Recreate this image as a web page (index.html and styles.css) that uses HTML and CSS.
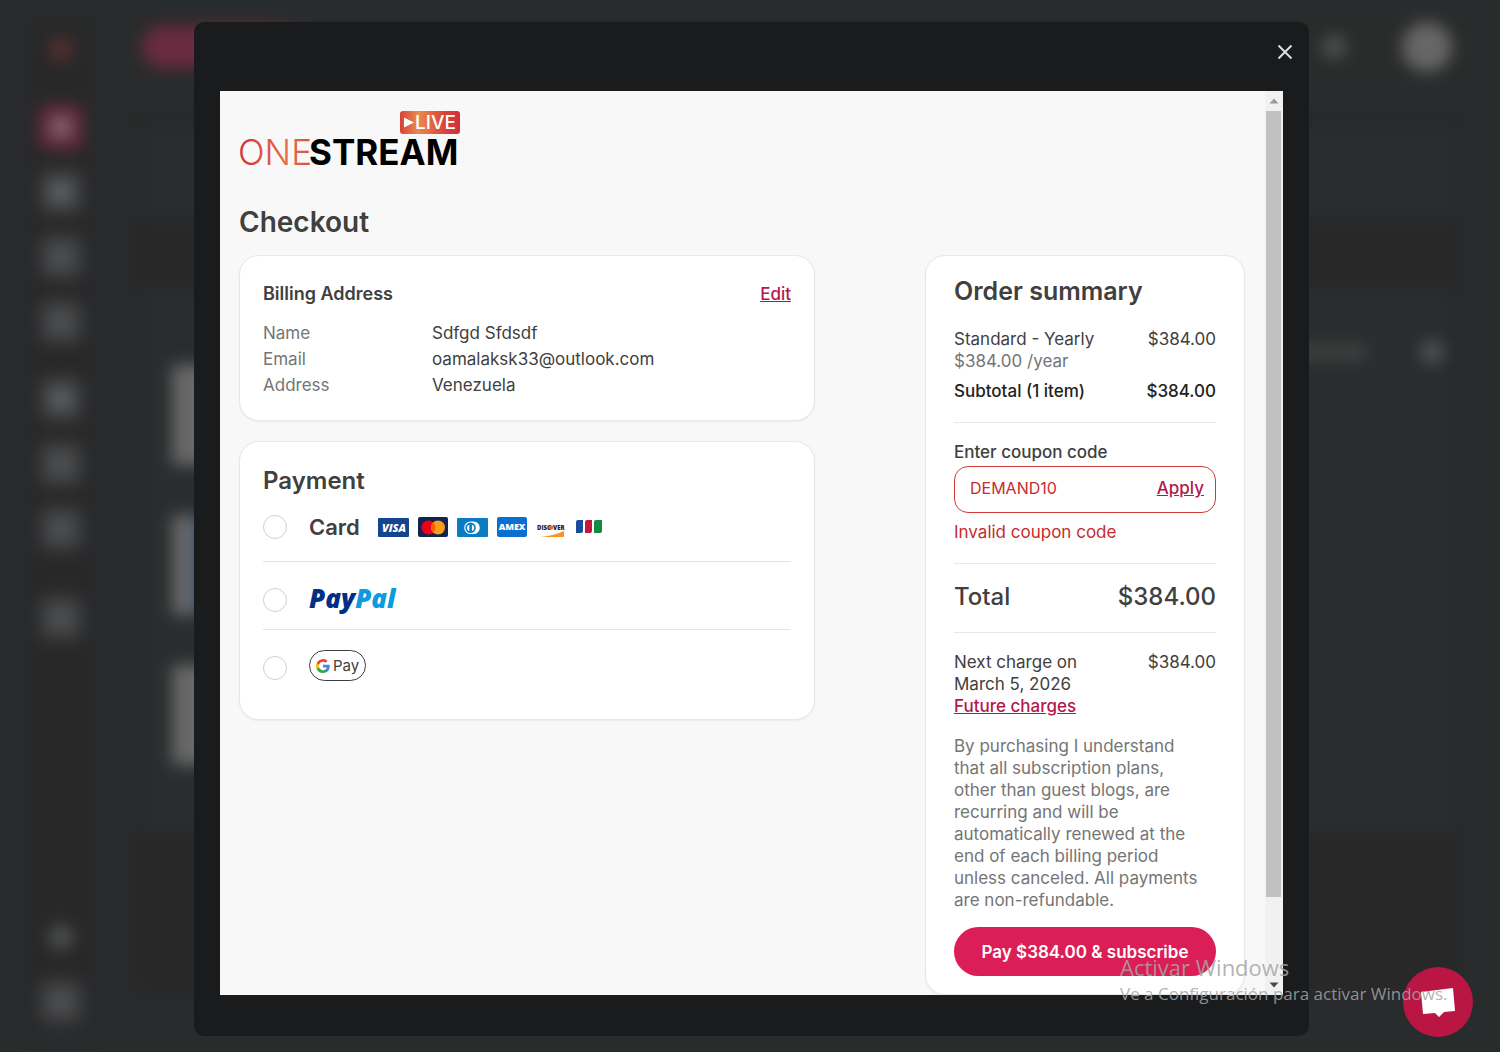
FILE: index.html
```html
<!DOCTYPE html>
<html lang="en">
<head>
    <meta charset="UTF-8">
    <meta name="viewport" content="width=device-width, initial-scale=1.0">
    <title>OneStream Live - Checkout</title>
    <link rel="stylesheet" href="styles.css">
</head>
<body>
    <!-- Dashboard behind the modal -->
    <div class="app" aria-hidden="true">
        <div class="sidebar">
            <span class="brand"></span>
            <span class="tile active"></span>
            <span class="tile bright"></span>
            <span class="tile"></span>
            <span class="tile"></span>
            <span class="tile bright group"></span>
            <span class="tile"></span>
            <span class="tile"></span>
            <span class="tile last"></span>
            <span class="dot"></span>
            <span class="tile"></span>
        </div>
        <div class="main">
            <div class="topbar">
                <span class="pill"></span>
                <span class="dot"></span>
                <span class="avatar"></span>
            </div>
            <div class="board">
                <div class="strip"></div>
                <div class="list">
                    <div class="tools">
                        <span class="bar"></span>
                        <span class="dot"></span>
                    </div>
                    <span class="thumb"></span>
                    <span class="thumb blue"></span>
                    <span class="thumb"></span>
                </div>
            </div>
        </div>
    </div>

    <div class="overlay">
        <div class="modal" role="dialog" aria-label="Checkout">
            <div class="modal-head">
                <button type="button" class="close" aria-label="Close">
                    <svg width="16" height="16" viewBox="0 0 16 16"><path d="M1.5 1.5l13 13M14.5 1.5l-13 13" stroke="#dcdfe0" stroke-width="2" fill="none"/></svg>
                </button>
            </div>

            <div class="frame">
                <main class="page">
                    <svg class="logo" width="222" height="60" viewBox="0 0 222 60" role="img" aria-label="OneStream Live">
                        <defs>
                            <linearGradient id="oneFill" x1="0" x2="1" y1="0" y2="0">
                                <stop offset="0" stop-color="#cf2e35"/>
                                <stop offset="0.65" stop-color="#e5704a"/>
                                <stop offset="1" stop-color="#d94a3c"/>
                            </linearGradient>
                            <linearGradient id="liveFill" x1="0" x2="1" y1="0" y2="0">
                                <stop offset="0" stop-color="#d6423a"/>
                                <stop offset="0.3" stop-color="#e98b4d"/>
                                <stop offset="0.75" stop-color="#d9423a"/>
                                <stop offset="1" stop-color="#cf3038"/>
                            </linearGradient>
                        </defs>
                        <rect x="161" y="1" width="60" height="23" rx="3" fill="url(#liveFill)"/>
                        <path d="M165 7.500v10l10-5z" fill="#fff"/>
                        <text class="logo-live" x="176" y="19">LIVE</text>
                        <text class="logo-one" x="-1" y="55" fill="url(#oneFill)">ONE</text>
                        <text class="logo-stream" x="70" y="55">STREAM</text>
                    </svg>

                    <h1>Checkout</h1>

                    <div class="columns">
                        <div class="left">
                            <section class="card billing">
                                <div class="card-head">
                                    <h2>Billing Address</h2>
                                    <a href="#edit">Edit</a>
                                </div>
                                <dl>
                                    <dt>Name</dt>
                                    <dd>Sdfgd Sfdsdf</dd>
                                    <dt>Email</dt>
                                    <dd>oamalaksk33@outlook.com</dd>
                                    <dt>Address</dt>
                                    <dd>Venezuela</dd>
                                </dl>
                            </section>

                            <section class="card payment">
                                <h2>Payment</h2>
                                <div class="method">
                                    <input type="radio" id="pay-card" name="method">
                                    <label for="pay-card">
                                        Card
                                        <span class="brands">
                                            <svg width="31" height="20" viewBox="0 0 31 20">
                                                <rect y="1" width="31" height="19" rx="1" fill="#15458f"/>
                                                <text class="visa" x="16" y="15" text-anchor="middle">VISA</text>
                                            </svg>
                                            <svg width="30" height="20" viewBox="0 0 30 20">
                                                <rect width="30" height="20" rx="2" fill="#14224f"/>
                                                <circle cx="10.500" cy="10.500" r="7" fill="#eb001b"/>
                                                <circle cx="20" cy="10.500" r="7" fill="#f79e1b"/>
                                                <path d="M15.250 5.400a7 7 0 0 1 0 10.200a7 7 0 0 1 0-10.200z" fill="#ff5f00"/>
                                            </svg>
                                            <svg width="31" height="20" viewBox="0 0 31 20">
                                                <rect y="1" width="31" height="19" rx="1" fill="#0b7cc1"/>
                                                <path d="M13.500 4.500h3a6.300 6.300 0 0 1 0 12.600h-3a6.300 6.300 0 0 1 0-12.600z" fill="#fff"/>
                                                <circle cx="13.600" cy="10.800" r="5.200" fill="#0b7cc1"/>
                                                <path d="M12.300 7.400a3.600 3.600 0 0 0 0 6.800zM14.900 7.400a3.600 3.600 0 0 1 0 6.800z" fill="#fff"/>
                                            </svg>
                                            <svg width="30" height="20" viewBox="0 0 30 20">
                                                <rect width="30" height="20" rx="2" fill="#0a6fd1"/>
                                                <text class="amex" x="15" y="13" text-anchor="middle">AMEX</text>
                                            </svg>
                                            <svg width="30" height="20" viewBox="0 0 30 20">
                                                <text class="discover" x="1" y="13">DISC</text>
                                                <circle cx="15" cy="10.500" r="2.300" fill="#ee6b23"/>
                                                <text class="discover" x="17" y="13">VER</text>
                                                <path d="M5 20c9-1 17-3 23-6v6z" fill="#f9941e"/>
                                            </svg>
                                            <svg width="28" height="20" viewBox="0 0 28 20">
                                                <path d="M3 3h5v11a2 2 0 0 1-2 2H1V5a2 2 0 0 1 2-2z" fill="#1b4c9b"/>
                                                <path d="M12 3h5v11a2 2 0 0 1-2 2h-5V5a2 2 0 0 1 2-2z" fill="#c9153d"/>
                                                <path d="M21 3h6v11a2 2 0 0 1-2 2h-6V5a2 2 0 0 1 2-2z" fill="#118a42"/>
                                            </svg>
                                        </span>
                                    </label>
                                </div>
                                <div class="method">
                                    <input type="radio" id="pay-paypal" name="method">
                                    <label for="pay-paypal" class="paypal"><span>Pay</span><span>Pal</span></label>
                                </div>
                                <div class="method">
                                    <input type="radio" id="pay-google" name="method">
                                    <label for="pay-google" class="gpay">
                                        <svg width="14" height="14" viewBox="0 0 18 18">
                                            <path d="M17.640 9.200c0-.64-.06-1.250-.16-1.840H9v3.480h4.840a4.140 4.140 0 0 1-1.800 2.720v2.260h2.920c1.700-1.570 2.680-3.880 2.680-6.620z" fill="#4285f4"/>
                                            <path d="M9 18c2.430 0 4.470-.8 5.960-2.180l-2.920-2.260c-.8.540-1.840.86-3.040.86-2.340 0-4.330-1.580-5.040-3.710H.960v2.330A9 9 0 0 0 9 18z" fill="#34a853"/>
                                            <path d="M3.960 10.710a5.400 5.400 0 0 1 0-3.420V4.960H.960a9 9 0 0 0 0 8.080z" fill="#fbbc05"/>
                                            <path d="M9 3.580c1.320 0 2.510.45 3.440 1.350l2.580-2.590A9 9 0 0 0 .960 4.960l3 2.330C4.670 5.160 6.660 3.580 9 3.580z" fill="#ea4335"/>
                                        </svg>
                                        Pay
                                    </label>
                                </div>
                            </section>
                        </div>

                        <aside class="card summary">
                            <h2>Order summary</h2>
                            <div class="row">
                                <span>Standard - Yearly</span>
                                <span>$384.00</span>
                            </div>
                            <div class="row muted">
                                <span>$384.00 /year</span>
                            </div>
                            <div class="row subtotal">
                                <span>Subtotal (1 item)</span>
                                <span>$384.00</span>
                            </div>

                            <form class="coupon">
                                <label for="coupon">Enter coupon code</label>
                                <div class="coupon-box">
                                    <input type="text" id="coupon" name="coupon" value="DEMAND10">
                                    <button type="button">Apply</button>
                                </div>
                                <p>Invalid coupon code</p>
                            </form>

                            <div class="row total">
                                <span>Total</span>
                                <span>$384.00</span>
                            </div>

                            <div class="row next">
                                <span>Next charge on<br>March 5, 2026</span>
                                <span>$384.00</span>
                            </div>
                            <a href="#future">Future charges</a>

                            <p class="terms">By purchasing I understand that all subscription plans, other than guest blogs, are recurring and will be automatically renewed at the end of each billing period unless canceled. All payments are non-refundable.</p>

                            <button type="submit" class="pay">Pay $384.00 &amp; subscribe</button>
                        </aside>
                    </div>
                </main>

                <div class="scrollbar">
                    <svg width="18" height="20" viewBox="0 0 18 20"><path d="M4.500 12.500l4.500-5 4.500 5z" fill="#9a9a9a"/></svg>
                    <div class="track"><div class="thumb-bar"></div></div>
                    <svg width="18" height="20" viewBox="0 0 18 20"><path d="M4.500 7.500l4.500 5 4.500-5z" fill="#484848"/></svg>
                </div>
            </div>
        </div>
    </div>

    <button type="button" class="chat" aria-label="Open chat">
        <svg width="36" height="30" viewBox="0 0 36 30"><path d="M1 5l32-4 2 23-11 1-5 5-4-4-12 1z" fill="#fff"/></svg>
    </button>

    <div class="watermark">
        <p class="big">Activar Windows</p>
        <p>Ve a Configuración para activar Windows.</p>
    </div>
</body>
</html>
```

FILE: styles.css
```css
/* Global Styles */
* {
    box-sizing: border-box;
}

body {
    font-family: 'Inter', sans-serif;
    font-size: 17px;
    line-height: 22px;
    margin: 0;
    height: 100vh;
    overflow: hidden;
    background-color: #292c2d;
    color: #404040;
}

h1, h2, p, dl, dd {
    margin: 0;
}

a {
    color: #b4174b;
    font-weight: 500;
}

button, input {
    font-family: inherit;
    font-size: inherit;
}

/* Blurred dashboard */
.app {
    display: flex;
    gap: 34px;
    height: 100vh;
    padding: 16px 36px 20px 26px;
    filter: blur(8px);
}

.sidebar {
    display: flex;
    flex-direction: column;
    align-items: center;
    gap: 21px;
    width: 70px;
    padding: 22px 0 8px;
    background-color: #282829;
}

.sidebar .dot {
    margin-bottom: 10px;
}

.brand {
    width: 22px;
    height: 22px;
    border-radius: 50%;
    background-color: #5c302f;
    margin-bottom: 24px;
}

.tile {
    width: 44px;
    height: 44px;
    border-radius: 8px;
    border: 12px solid #3e3f40;
    background-color: #505152;
}

.tile.bright {
    background-color: #606162;
}

.tile.active {
    border-color: #64293b;
    background-color: #7d6670;
}

.tile.group {
    margin-top: 12px;
}

.tile.last {
    margin-top: 24px;
    margin-bottom: auto;
}

.dot {
    width: 24px;
    height: 24px;
    border-radius: 50%;
    background-color: #4f5151;
}

.main {
    flex: 1;
    display: flex;
    flex-direction: column;
    gap: 32px;
}

.topbar {
    display: flex;
    align-items: center;
    gap: 56px;
    height: 62px;
    padding: 0 12px;
    background-color: #2a2b2b;
}

.topbar .pill {
    width: 160px;
    height: 42px;
    border-radius: 21px;
    background-color: #6a2b41;
    margin-right: auto;
}

.avatar {
    width: 50px;
    height: 50px;
    border-radius: 50%;
    background-color: #666667;
}

.board {
    display: flex;
    flex-direction: column;
    gap: 76px;
    flex: 1;
    padding: 16px 10px 0;
    background-color: #282829;
    margin-bottom: 34px;
}

.strip {
    height: 90px;
    background-color: #292d2e;
}

.list {
    display: flex;
    flex-direction: column;
    gap: 50px;
    padding: 47px 10px 66px 32px;
    background-color: #292d2e;
}

.tools {
    display: flex;
    align-items: center;
    justify-content: flex-end;
    gap: 54px;
    height: 26px;
    margin-bottom: -50px;
}

.tools .bar {
    width: 120px;
    height: 14px;
    background-color: #434343;
}

.list .thumb {
    width: 120px;
    height: 100px;
    background-color: #686868;
}

.list .thumb.blue {
    border-right: 98px solid #34506f;
}

/* Modal */
.overlay {
    position: absolute;
    inset: 0;
    padding: 22px 191px 16px 194px;
}

.modal {
    display: flex;
    flex-direction: column;
    height: 100%;
    padding: 0 26px 41px;
    border-radius: 10px;
    background-color: #191b1c;
}

.modal-head {
    display: flex;
    justify-content: flex-end;
    align-items: center;
    height: 69px;
    padding-bottom: 10px;
}

.close {
    display: flex;
    padding: 6px;
    margin-right: -16px;
    border: none;
    background: none;
    cursor: pointer;
}

.frame {
    flex: 1;
    display: flex;
    min-height: 0;
    background-color: #f8f8f8;
}

.page {
    flex: 1;
    padding: 19px 20px 0 19px;
    overflow: hidden;
}

.scrollbar {
    display: flex;
    flex-direction: column;
    width: 18px;
    background-color: #f1f1f1;
}

.track {
    flex: 1;
    padding: 0 2px 0 1px;
}

.thumb-bar {
    height: 91%;
    background-color: #c1c1c1;
}

/* Checkout */
.logo {
    display: block;
    overflow: visible;
}

.logo-live {
    font-size: 19px;
    font-weight: 500;
    fill: #fff;
}

.logo-one {
    font-size: 35px;
    font-weight: 300;
}

.logo-stream {
    font-size: 35px;
    font-weight: 700;
    fill: #000;
}

h1 {
    font-size: 28px;
    font-weight: 600;
    line-height: 36px;
    margin: 34px 0 15px;
}

.columns {
    display: flex;
    align-items: flex-start;
    justify-content: space-between;
    gap: 24px;
}

.left {
    display: flex;
    flex-direction: column;
    gap: 20px;
    width: 576px;
}

.card {
    border: 1px solid #e8e8e8;
    border-radius: 20px;
    background-color: #fff;
    box-shadow: 0 1px 2px rgba(0, 0, 0, 0.06);
}

.card h2 {
    font-size: 24px;
    font-weight: 600;
    line-height: 34px;
}

.billing {
    padding: 24px 23px 22px;
}

.card-head {
    display: flex;
    justify-content: space-between;
    align-items: center;
    margin-bottom: 12px;
}

.billing h2 {
    font-size: 18px;
    line-height: 28px;
}

.billing dl {
    display: grid;
    grid-template-columns: 169px 1fr;
    line-height: 26px;
}

.billing dt {
    color: #757575;
}

.payment {
    padding: 22px 23px 14px;
}

.method {
    display: flex;
    align-items: center;
    gap: 22px;
    height: 68px;
}

.method:nth-of-type(1) {
    height: 63px;
    padding-bottom: 6px;
}

.method:nth-of-type(2) {
    padding-top: 8px;
}

.method:nth-of-type(3) {
    height: 76px;
}

.method + .method {
    border-top: 1px solid #e2e5e5;
}

.method input {
    appearance: none;
    width: 24px;
    height: 24px;
    margin: 0;
    border: 1px solid #cfcfcf;
    border-radius: 50%;
    background-color: #fff;
}

.method label {
    display: flex;
    align-items: center;
    gap: 18px;
    font-size: 22px;
    font-weight: 600;
}

.brands {
    display: flex;
    align-items: center;
    gap: 9px;
}

.visa {
    font: italic 800 11px 'Open Sans', sans-serif;
    fill: #fff;
}

.amex {
    font: 800 9px 'Open Sans', sans-serif;
    fill: #fff;
}

.discover {
    font: 800 6px 'Open Sans', sans-serif;
    fill: #222;
}

.method .paypal {
    gap: 0;
    margin-bottom: 4px;
    font: italic 800 26px/34px 'Open Sans', sans-serif;
    color: #012f86;
}

.paypal span + span {
    color: #0c9bdc;
}

.method .gpay {
    justify-content: center;
    gap: 3px;
    width: 57px;
    height: 31px;
    margin-bottom: 4px;
    border: 1px solid #3c4043;
    border-radius: 16px;
    font-size: 15px;
    font-weight: 400;
}

/* Order summary */
.summary {
    width: 320px;
    padding: 18px 28px;
}

.card.summary h2 {
    font-size: 25px;
    margin-bottom: 20px;
}

.row {
    display: flex;
    justify-content: space-between;
}

.muted {
    color: #757575;
}

.subtotal {
    margin: 8px 0 20px;
    font-weight: 500;
    color: #222;
}

.coupon {
    padding: 18px 0 20px;
    border-top: 1px solid #e8e8e8;
    border-bottom: 1px solid #e8e8e8;
}

.coupon label {
    display: block;
    margin-bottom: 3px;
    font-weight: 500;
}

.coupon-box {
    display: flex;
    align-items: center;
    height: 47px;
    padding: 0 11px 3px 15px;
    border: 1px solid #cf3a35;
    border-radius: 14px;
}

.coupon-box input {
    flex: 1;
    min-width: 0;
    padding: 0;
    border: none;
    outline: none;
    background: none;
    color: #c72c2c;
    font-size: 16px;
}

.coupon-box button {
    padding: 0;
    border: none;
    background: none;
    color: #b4174b;
    font-weight: 500;
    text-decoration: underline;
    cursor: pointer;
}

.coupon p {
    margin-top: 8px;
    color: #c72c2c;
}

.total {
    padding: 16px 0 18px;
    border-bottom: 1px solid #e8e8e8;
    font-size: 24px;
    font-weight: 500;
    line-height: 34px;
}

.next {
    margin-top: 18px;
}

.terms {
    margin: 18px 0 16px;
    padding-right: 16px;
    color: #757575;
}

.pay {
    width: 100%;
    height: 49px;
    border: none;
    border-radius: 25px;
    background-color: #dc1e56;
    color: #fff;
    font-weight: 600;
    cursor: pointer;
}

/* Floating items */
.chat {
    position: absolute;
    right: 27px;
    bottom: 15px;
    display: flex;
    align-items: center;
    justify-content: center;
    width: 70px;
    height: 70px;
    border: none;
    border-radius: 50%;
    background-color: #b91643;
    cursor: pointer;
}

.watermark {
    position: absolute;
    right: 58px;
    bottom: 45px;
    width: 322px;
    font-family: 'Open Sans', sans-serif;
    font-size: 17px;
    line-height: 26px;
    color: rgba(165, 165, 165, 0.85);
    pointer-events: none;
    white-space: nowrap;
}

.watermark .big {
    font-size: 22px;
    line-height: 28px;
}
```
